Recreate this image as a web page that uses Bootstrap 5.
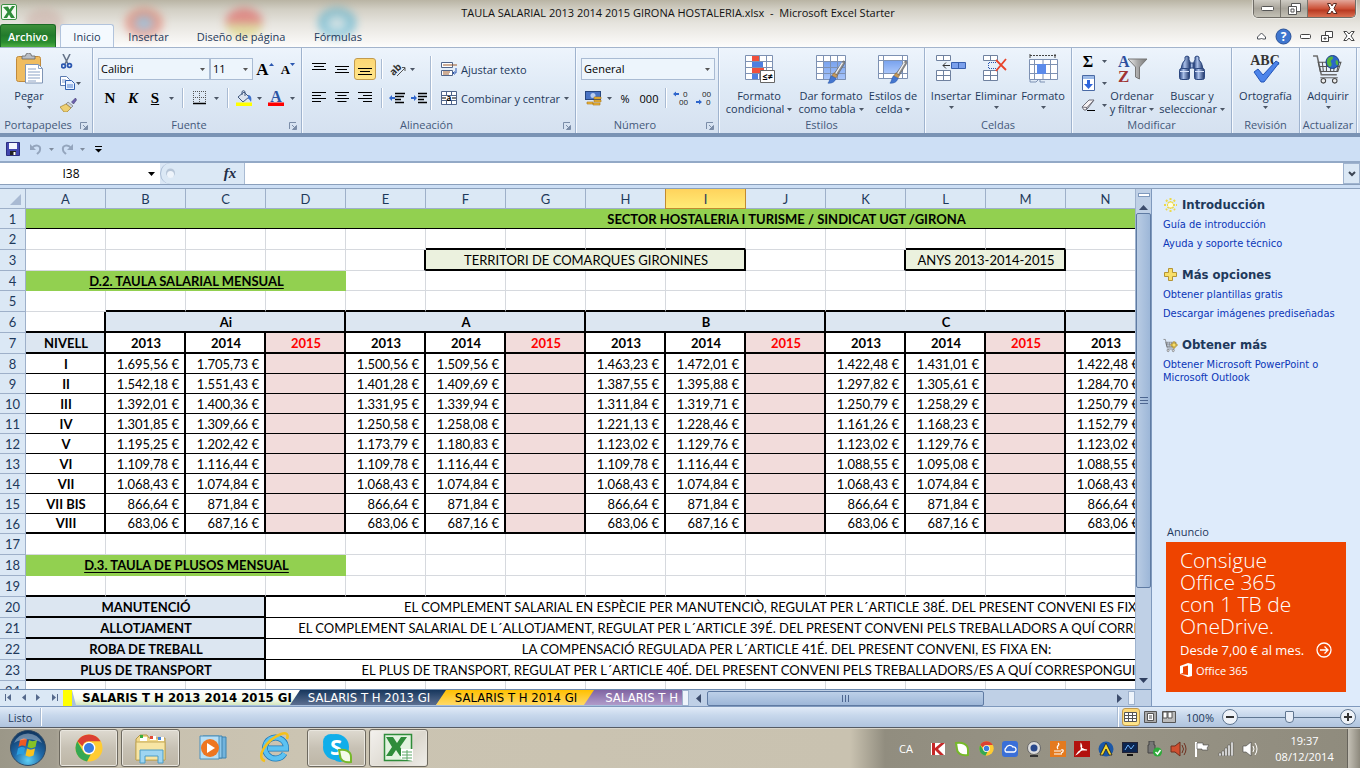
<!DOCTYPE html>
<html lang="es">
<head>
<meta charset="utf-8">
<meta name="viewport" content="width=device-width, initial-scale=1">
<title>TAULA SALARIAL 2013 2014 2015 GIRONA HOSTALERIA.xlsx - Microsoft Excel Starter</title>
<link href="https://cdn.jsdelivr.net/npm/bootstrap@5.3.0/dist/css/bootstrap.min.css" rel="stylesheet">
<style>
  :root { --ink:#1e395b; --edge:#8ba0bc; }
  body { font:11px/13px "Open Sans", "Noto Sans", sans-serif; color:var(--ink); overflow:hidden; background:#cddff5; }
  svg { display:block; flex:none; }
  button { border:0; background:none; padding:0; color:inherit; font:inherit; display:flex; align-items:center; justify-content:center; }
  .app-shell { height:100vh; }

  /* window frame */
  .glass { position:relative; height:48px; overflow:hidden; border-bottom:1px solid #a3b4cc;
    background:linear-gradient(180deg,#b9b4a4 0,#d2cfc4 20%,#e6e4de 50%,#f8f7f5 90%,#fdfdfc 100%); }
  .glow { position:absolute; border-radius:50%; filter:blur(4px); opacity:.5; width:38px; height:30px; top:8px; }
  .title-bar { height:24px; position:relative; }
  .title-side { flex:1 1 0; }
  .title-text { font-size:11px; color:#111; }
  .frame-keys { border:1px solid #6f6c66; border-top:0; border-radius:0 0 5px 5px; overflow:hidden; height:18px; box-shadow:0 0 0 1px rgba(255,255,255,.4); }
  .frame-keys button { height:17px; background:linear-gradient(#cfccc4,#a8a49a 50%,#c4c1b6); border-right:1px solid #77746c; width:27px; }
  .frame-keys .shut { width:47px; border:0; background:linear-gradient(#e3a79a,#cc5239 50%,#b93a22 60%,#da7052); }
  .tab-row { height:24px; position:relative; }
  .tab-row a { color:var(--ink); text-decoration:none; height:24px; display:flex; align-items:center; justify-content:center; }
  .tab-row .file-tab { width:56px; color:#fff; font-weight:600; background:linear-gradient(#3d8f3a,#227b2b 45%,#2b8d30 75%,#56b545); border:1px solid #1b6a25; border-bottom:0; border-radius:3px 3px 0 0; }
  .tab-row .on { width:54px; margin-left:4px; background:#f4f9fe; border:1px solid #b1c3dc; border-bottom:0; border-radius:3px 3px 0 0; }

  /* ribbon */
  .ribbon { height:89px; background:linear-gradient(#edf4fc,#dfeaf6 45%,#d5e1f0); border-bottom:4px solid #7a93b4; }
  .grp { border-right:1px solid #9fb3ce; box-shadow:1px 0 0 #f6faff; display:flex; flex-direction:column; flex:none; }
  .grp-main { height:69px; display:flex; }
  .grp-name { height:16px; color:#44597a; text-align:center; position:relative; line-height:16px; }
  .grp-name svg { position:absolute; right:4px; top:5px; }
  .big { flex-direction:column; justify-content:flex-start; padding-top:5px; line-height:13px; }
  .big svg.pic { margin-bottom:4px; }
  .big .arr { margin-top:4px; }
  .duo { line-height:13px; text-align:center; white-space:nowrap; }
  .duo svg { display:inline-block; vertical-align:2px; }
  .row-top { height:22px; margin-top:10px; display:flex; align-items:center; }
  .row-low { height:24px; margin-top:6px; display:flex; align-items:center; }
  .w8{width:8px}.w10{width:10px}.w12{width:12px}.w14{width:14px}.w20{width:20px}.w22{width:22px}.w24{width:24px}
  .rib-select { font:11px/20px "Open Sans", sans-serif; color:#000; height:22px; padding:0 2px; border:1px solid #a9bbd3; border-radius:0; appearance:none; background-color:#edf5fc;
    background-image:url("data:image/svg+xml,%3Csvg xmlns='http://www.w3.org/2000/svg' width='5' height='3'%3E%3Cpath d='M0 0h5L2.5 3z' fill='%23555'/%3E%3C/svg%3E"); background-repeat:no-repeat; background-position:right 4px center; }
  .serif { font-family:"Liberation Serif", serif; font-weight:bold; font-size:15px; color:#000; }
  .bar { width:1px; height:20px; background:#a9bbd3; box-shadow:1px 0 0 #fff; }
  .lit { background:linear-gradient(#fdd774,#ffe68b); border:1px solid #c29b4e; border-radius:3px; height:22px; }

  .quick { height:26px; background:#cddff5; border-bottom:2px solid #93a9c6; padding-left:3px; gap:3px; }
  .formula { height:22px; background:#dbe7f5; border-bottom:1px solid #8ba0bc; margin-bottom:3px; }
  .formula input { border:0; background:#fff; height:21px; outline:0; border-radius:0; color:#000; padding:0; }
  .name-box { width:160px; }
  .name-box input { width:142px; text-align:center; font-size:12px; }
  .fx-box { width:85px; border:1px solid #a9bbd3; border-width:0 1px 0 1px; border-radius:11px 0 0 11px; background:#dbe8f5; }
  .drop-end { width:17px; border:1px solid #9fb3ce; background:#dbe8f5; }

  /* sheet */
  .work { min-height:0; border-top:1px solid #8ba0bc; }
  .sheet-clip { overflow:hidden; min-height:0; background:#fff; }
  .xl { table-layout:fixed; border-collapse:separate; border-spacing:0; width:1546px; font:13px/16px Lato, sans-serif; color:#000; }
  .xl td, .xl th { padding:0 3px 0 5px; height:21px; border:solid #d6d9de; border-width:0 1px 1px 0; text-align:center; white-space:nowrap; font-weight:normal; overflow:hidden; }
  .xl tr.h20 > * { height:20px; }
  .xl thead th, .xl tbody th { background:#dbe8f5; color:var(--ink); border-color:#9eb0c9; padding:0; font-size:13px; }
  .xl thead th.sel { background:linear-gradient(#ffd35c,#ffec78); border-color:#c28a30; box-shadow:-1px 0 0 #c28a30; }
  .xl td.bb { border-bottom:2px solid #000; } .xl td.b1 { border-bottom:1px solid #000; }
  .xl td.br { border-right:2px solid #000; }
  .xl td.fw { font-weight:bold; }
  .xl td.green { background:#92d050; border-color:#92d050; font-weight:bold; }
  .xl td.green.b1 { border-bottom-color:#000; }
  .xl td.olive { background:#ebf1de; } .xl td.blue { background:#dce6f1; font-weight:bold; }
  .xl td.pink { background:#f2dcdb; color:#f00; font-weight:bold; }
  .xl td.num { text-align:right; padding:0 5px 0 0; }
  .xl u { text-underline-offset:2px; }

  .vscroll { width:16px; background:#bfd0e6; border-left:1px solid #9fb3ce; }
  .vthumb { height:75%; border:1px solid #5f7ba3; border-radius:2px; background:linear-gradient(90deg,#b9cce4,#9db7d8); }
  .sheet-tabs { height:17px; background:#a9c0dd; border-top:1px solid #6e8bb0; font:13px/15px "DejaVu Sans Condensed", "DejaVu Sans", sans-serif; overflow:hidden; }
  .sheet-tabs button { height:15px; white-space:nowrap; }
  .sheet-tabs .leaf { clip-path:polygon(10px 0,100% 0,calc(100% - 12px) 100%,0 100%); margin-right:-12px; }
  .hthumb { width:277px; border:1px solid #5f7ba3; border-radius:2px; background:linear-gradient(#bdd0e8,#9db7d8); height:15px; }

  .side { width:209px; background:#deebfb; border-left:1px solid #7f99bd; padding:8px 4px 0 11px; font:11px/13px "DejaVu Sans Condensed", "DejaVu Sans", sans-serif; }
  .side h2 { font-size:13px; line-height:16px; font-weight:bold; margin:0 0 5px; display:flex; align-items:center; gap:4px; }
  .side h2 svg { width:15px; }
  .side a { color:#0b36b8; text-decoration:none; display:block; margin-bottom:6px; }
  .side section { margin-bottom:11px; }
  .ad { background:#ee4400; width:180px; height:150px; margin-left:3px; padding:7px 14px; color:#fff; font-family:"Open Sans", sans-serif; }
  .ad .pitch { font-weight:300; font-size:21px; line-height:22px; }

  .status { height:22px; background:linear-gradient(#e1ebf7,#c8d8ec 40%,#b0c4de); border-top:1px solid #7f99bd; border-bottom:1px solid #555b63; }
  .zoomer { appearance:none; background:linear-gradient(#5f7691,#5f7691) center/100% 1px no-repeat; width:102px; height:16px; margin:0; }
  .zoomer::-webkit-slider-thumb { appearance:none; width:9px; height:12px; background:#e8eef7; border:1px solid #5f7691; border-radius:1px 1px 4px 4px; }
  .task { height:40px; background:linear-gradient(90deg,#9b9788 0,#a39e90 56px,#c6bfae 70px,#cbc4b2 300px,#c9c2b0 850px,#918d7f 885px,#989486 1100px,#8f8b7d 100%); border-top:1px solid #d9d4c8; }
  .task .apps { gap:3px; }
  .task .win { width:59px; height:38px; border:1px solid #6d695f; border-radius:3px; background:linear-gradient(#dedad0,#c7c1b4 50%,#bdb6a6); box-shadow:inset 0 0 0 1px #e9e6de; }
  .task .flat { width:59px; height:38px; }
  .task .front { background:linear-gradient(135deg,#f3f1ee,#dcd8ce 60%,#f0eeea); }
  .clock { font-size:11px; line-height:16px; color:#fff; text-align:center; }
  .peek { width:13px; background:linear-gradient(90deg,#c5c1b6,#8d897d); border-left:1px solid #66635b; }
</style>
</head>
<body>

<svg width="0" height="0" class="position-absolute" aria-hidden="true">
  <defs>
    <linearGradient id="gTask" x1="0" y1="0" x2="0" y2="1"><stop offset="0" stop-color="#7aa3ee"/><stop offset="1" stop-color="#a9c6fb"/></linearGradient>
    <linearGradient id="gMetal" x1="0" x2="1"><stop offset="0" stop-color="#eee"/><stop offset=".5" stop-color="#aaa"/><stop offset="1" stop-color="#777"/></linearGradient>
    <radialGradient id="gOrb" cx=".5" cy=".85" r=".9"><stop offset="0" stop-color="#5fd0f5"/><stop offset=".45" stop-color="#1f68a8"/><stop offset="1" stop-color="#0d2c52"/></radialGradient>
    <linearGradient id="gBino" x1="0" x2="1"><stop offset="0" stop-color="#24407c"/><stop offset=".4" stop-color="#a9bfe8"/><stop offset="1" stop-color="#1d3468"/></linearGradient>
    <symbol id="arr" viewBox="0 0 5 3"><path d="M0 0h5L2.500 3z" fill="#4c5666"/></symbol>
    <symbol id="dlg" viewBox="0 0 8 8"><path d="M.5 7V.5H7" fill="none" stroke="#7b8da8"/><path d="M3 3l3 3M7.500 3.500v4h-4z" fill="#7b8da8" stroke="#7b8da8"/></symbol>
    <symbol id="brush" viewBox="0 0 20 28"><path d="M18 1c2 0 2 2 1 4l-8 13-4-2z" fill="#8b8b8b" stroke="#555" stroke-width=".6"/><path d="M17 3L9 16" stroke="#f4f4f4" stroke-width="1.500"/><path d="M7 15l4 3-1.500 3-5-2.500z" fill="#c69a5c" stroke="#8a6430" stroke-width=".6"/><path d="M4 18.500l5.500 3C8 26 4 27.500 0 27c2-2 2-6 4-8.500z" fill="#4476cf" stroke="#2a55a5" stroke-width=".6"/></symbol>
    <symbol id="cart" viewBox="0 0 30 30"><path d="M1 2h4l4 18h15" fill="none" stroke="#6e6e6e" stroke-width="1.500"/><path d="M6 8h22l-3 9H8zM7 12h20M10 8l1 9m3-9v9m4-9v9m4-9l-1 9m5-9l-2 9" fill="none" stroke="#555" stroke-width="1"/><circle cx="11" cy="26" r="2.200" fill="#eee" stroke="#444"/><circle cx="22" cy="26" r="2.200" fill="#eee" stroke="#444"/><path d="M8 23h17" stroke="#666"/></symbol>
    <symbol id="chrome" viewBox="0 0 28 28"><circle cx="14" cy="14" r="13.500" fill="#fc3"/><path d="M14 .5A13.500 13.500 0 0 1 25.700 7.300H14a6.700 6.700 0 0 0-6.500 5L2.300 7.300A13.500 13.500 0 0 1 14 .5z" fill="#dc4033"/><path d="M2.300 7.300L8.200 17.400a6.700 6.700 0 0 0 7.500 3L12 27.400A13.500 13.500 0 0 1 2.300 7.300z" fill="#35a853"/><circle cx="14" cy="14" r="6.300" fill="#fff"/><circle cx="14" cy="14" r="5" fill="#3a7de0"/></symbol>
  </defs>
</svg>

<div class="app-shell d-flex flex-column">

<header class="glass flex-shrink-0">
  <span class="glow" style="left:125px;background:radial-gradient(#6a9ccc 25%,#e0604a 45%)"></span>
  <span class="glow" style="left:225px;background:linear-gradient(#e04040 45%,#c8d060 60%,#e8c850)"></span>
  <span class="glow" style="left:318px;background:radial-gradient(#bfe0ea 20%,#1f9cc8 55%)"></span>
  <span class="glow" style="left:25px;background:#c8a8a0"></span>
  <div class="title-bar d-flex align-items-center">
    <div class="title-side"><svg width="18" height="18" viewBox="0 0 18 18"><rect x="1.500" y="1.500" width="15" height="15" rx="1.500" fill="#f4fbf2" stroke="#3b8f43"/><path d="M3 4l5-.5 1.500 3L12 3h3l-4 6 4 6h-4l-2-3.500L7 15H3.500l4-6z" fill="#2f8c3a"/></svg></div>
    <span class="title-text">TAULA SALARIAL 2013 2014 2015 GIRONA HOSTALERIA.xlsx&nbsp; - &nbsp;Microsoft Excel Starter</span>
    <div class="title-side d-flex justify-content-end align-self-start pe-1">
      <div class="frame-keys d-flex">
        <button aria-label="Minimizar"><svg width="13" height="6"><rect x=".5" y=".5" width="12" height="4" rx="1" fill="#fff" stroke="#555"/></svg></button>
        <button aria-label="Restaurar"><svg width="13" height="12" fill="#fff" stroke="#555"><path d="M3.500.5h9v8h-9z"/><path d="M.5 3.500h8v8h-8z"/><path d="M3 6h3v3H3z"/></svg></button>
        <button class="shut" aria-label="Cerrar"><svg width="12" height="11"><path d="M1.500.5h3L6 3l1.500-2.500h3L8 5.500l3 5H7.500L6 8l-1.500 2.500H1l3-5z" fill="#fff" stroke="#5b2a22"/></svg></button>
      </div>
    </div>
  </div>
  <nav class="tab-row d-flex">
    <a href="#" class="file-tab">Archivo</a>
    <a href="#" class="on">Inicio</a>
    <a href="#" style="width:69px">Insertar</a>
    <a href="#" style="width:116px">Diseño de página</a>
    <a href="#" style="width:78px">Fórmulas</a>
    <div class="ms-auto d-flex align-items-center">
      <button class="w22" aria-label="Minimizar cinta"><svg width="9" height="8"><path d="M.5 5L4.500 1l4 4v2h-3l-1-1-1 1h-3z" fill="#fff" stroke="#4a4f57"/></svg></button>
      <button class="w22" aria-label="Ayuda"><svg width="17" height="17"><circle cx="8.500" cy="8.500" r="7.500" fill="#3f76cf" stroke="#2a5298"/><text x="8.500" y="13" font-size="12" font-weight="bold" fill="#fff" text-anchor="middle">?</text></svg></button>
      <button class="w22" aria-label="Minimizar libro"><svg width="11" height="5"><rect x=".5" y=".5" width="10" height="4" rx="1" fill="#fff" stroke="#444"/></svg></button>
      <button class="w22" aria-label="Restaurar libro"><svg width="12" height="11" fill="#fff" stroke="#444"><path d="M4.500.5h7v6h-7z"/><path d="M.5 4.500h7v6h-7z"/><path d="M3 7h2v1H3z"/></svg></button>
      <button class="w22" aria-label="Cerrar libro"><svg width="12" height="10"><path d="M.8.500h3L6 3 8.200.500h3L8 5l3.200 4.500h-3L6 7 3.800 9.500h-3L4 5z" fill="#fff" stroke="#444"/></svg></button>
    </div>
  </nav>
</header>

<div class="ribbon d-flex flex-shrink-0">
  <div class="grp" style="width:93px">
    <div class="grp-main">
      <button class="big" style="width:58px">
        <svg class="pic" width="30" height="32" viewBox="0 0 30 32"><rect x="2.500" y="3.500" width="24" height="25" rx="2" fill="#efbc60" stroke="#c08a3c"/><path d="M8 6V3h3.500a3 3 0 0 1 6 0H21v3z" fill="#b9bec6" stroke="#666" stroke-width=".8"/><path d="M11.500 11.500h13l4 4v14.500h-17z" fill="#fff" stroke="#7f95b5"/><path d="M24.500 11.500v4h4M14 16h8m-8 3h12m-12 3h12m-12 3h12m-12 3h8" fill="none" stroke="#8ba2c5"/></svg>
        Pegar<svg class="arr" width="5" height="3"><use href="#arr"/></svg></button>
      <div class="d-flex flex-column pt-1 gap-1">
        <button style="height:18px;width:18px" aria-label="Cortar"><svg width="12" height="15" viewBox="0 0 12 15"><path d="M2 0l5 10M9 0L4 10" stroke="#66748a" stroke-width="1.600"/><circle cx="2.500" cy="12" r="1.900" fill="none" stroke="#2b57b0" stroke-width="1.800"/><circle cx="8.500" cy="11.500" r="1.900" fill="none" stroke="#2b57b0" stroke-width="1.800"/></svg></button>
        <div class="d-flex"><button style="height:18px;width:18px" aria-label="Copiar"><svg width="15" height="14"><path d="M.5.5h6l3 3v6h-9z" fill="#fff" stroke="#5a7ab0"/><path d="M2 4h4M2 6h4" stroke="#7f9cd0"/><path d="M5.500 4.500h6l3 3v6h-9z" fill="#eaf2ff" stroke="#2f5faf"/><path d="M7 9h6m-6 2h6" stroke="#4f80d0"/></svg></button><svg class="align-self-center" width="5" height="3"><use href="#arr"/></svg></div>
        <button style="height:18px;width:20px" aria-label="Copiar formato"><svg width="17" height="14" viewBox="0 0 17 14"><path d="M15.500 0l-4 4 2 2L16.500 2z" fill="#6c5fae" stroke="#413a70" stroke-width=".6"/><path d="M8 4l5 4-2 2-5-4z" fill="#ccd2da" stroke="#666" stroke-width=".6"/><path d="M6 6l5 4-4 4H4L0 9z" fill="#edcf72" stroke="#a27f2c" stroke-width=".7"/></svg></button>
      </div>
    </div>
    <div class="grp-name pe-3">Portapapeles<svg width="8" height="8"><use href="#dlg"/></svg></div>
  </div>

  <div class="grp" style="width:209px">
    <div class="grp-main flex-column" style="padding-left:5px">
      <div class="row-top">
        <select class="rib-select" style="width:112px" aria-label="Fuente"><option>Calibri</option></select>
        <select class="rib-select" style="width:43px" aria-label="Tamaño"><option>11</option></select>
        <button class="w24 serif" style="font-size:17px" aria-label="Aumentar tamaño">A<svg class="align-self-start" width="5" height="3"><path d="M0 3h5L2.500 0z" fill="#2b57b0"/></svg></button>
        <button class="w22 serif" style="font-size:13px" aria-label="Reducir tamaño">A<svg class="align-self-start" width="5" height="3"><path d="M0 0h5L2.500 3z" fill="#2b57b0"/></svg></button>
      </div>
      <div class="row-low">
        <button class="w24 serif">N</button><button class="w22 serif fst-italic">K</button><button class="w22 serif text-decoration-underline">S</button>
        <button class="w10" aria-label="Subrayado"><svg width="5" height="3"><use href="#arr"/></svg></button>
        <span class="w12 d-flex justify-content-center"><span class="bar"></span></span>
        <button class="w24" aria-label="Bordes"><svg width="14" height="14"><path d="M.5 0v13M6.500 0v13M12.500 0v13M0 .5h13M0 6.500h13" stroke="#555" stroke-dasharray="1 1"/><path d="M0 12.500h13" stroke="#000" stroke-width="1.500"/></svg></button>
        <button class="w8" aria-label="Más bordes"><svg width="5" height="3"><use href="#arr"/></svg></button>
        <span class="w14 d-flex justify-content-center"><span class="bar"></span></span>
        <button class="w20" aria-label="Color de relleno"><svg width="17" height="17"><path d="M2 7l6-5 5 5-6 5z" fill="#dbe4ef" stroke="#41597f"/><path d="M6 5V1.500a2 2 0 0 1 3 0V6" fill="none" stroke="#41597f"/><path d="M12 5c3 0 4 3 3 7-1-2-2-3-3-3.500z" fill="#3f72ca"/><path d="M0 12.500h16V16H0z" fill="#ff0"/></svg></button>
        <button class="w10" aria-label="Más rellenos"><svg width="5" height="3"><use href="#arr"/></svg></button>
        <button class="w24" aria-label="Color de fuente"><svg width="16" height="17"><text x="8" y="12" text-anchor="middle" font-family="Liberation Serif" font-weight="bold" font-size="16" fill="#2c55a4">A</text><path d="M0 12.500h16V16H0z" fill="red"/></svg></button>
        <button class="w8" aria-label="Más colores"><svg width="5" height="3"><use href="#arr"/></svg></button>
      </div>
    </div>
    <div class="grp-name pe-3">Fuente<svg width="8" height="8"><use href="#dlg"/></svg></div>
  </div>

  <div class="grp" style="width:274px">
    <div class="grp-main" style="padding-left:6px">
      <div>
        <div class="row-top">
          <button class="w22" aria-label="Alinear arriba"><svg width="14" height="12"><path d="M0 .5h14M2 3.500h10M0 6.500h14" stroke="#000"/></svg></button>
          <button class="w24" aria-label="Alinear al medio"><svg width="14" height="12"><path d="M0 3.500h14M2 6.500h10M0 9.500h14" stroke="#000"/></svg></button>
          <button class="w22 lit" aria-label="Alinear abajo"><svg width="14" height="14"><path d="M0 6.500h14M2 9.500h10M0 12.500h14" stroke="#000"/></svg></button>
          <span class="w10 d-flex justify-content-center"><span class="bar"></span></span>
          <button class="w24" aria-label="Orientación"><svg width="17" height="15"><text transform="rotate(-45 7 8)" x="0" y="10" font-size="10" font-weight="bold" fill="#333">ab</text><path d="M7 14l8-8m0 3V5.500h-3" fill="none" stroke="#555"/></svg></button>
          <svg width="5" height="3"><use href="#arr"/></svg>
        </div>
        <div class="row-low">
          <button class="w22" aria-label="Izquierda"><svg width="14" height="12"><path d="M0 .5h14M0 3.500h9M0 6.500h14M0 9.500h9" stroke="#000"/></svg></button>
          <button class="w24" aria-label="Centrar"><svg width="14" height="12"><path d="M0 .5h14M2.500 3.500h9M0 6.500h14M2.500 9.500h9" stroke="#000"/></svg></button>
          <button class="w22" aria-label="Derecha"><svg width="14" height="12"><path d="M0 .5h14M5 3.500h9M0 6.500h14M5 9.500h9" stroke="#000"/></svg></button>
          <span class="w10 d-flex justify-content-center"><span class="bar"></span></span>
          <button class="w22" aria-label="Disminuir sangría"><svg width="16" height="13"><path d="M6 1.500h10M6 4.500h9M6 7.500h6M6 10.500h9" stroke="#000" stroke-width="1.400"/><path d="M0 6l3-3v2h3v2H3v2z" fill="#2f66cc"/></svg></button>
          <button class="w22" aria-label="Aumentar sangría"><svg width="16" height="13"><path d="M7 1.500h9M7 4.500h9M7 7.500h6M7 10.500h9" stroke="#000" stroke-width="1.400"/><path d="M6 6L3 3v2H0v2h3v2z" fill="#2f66cc"/></svg></button>
        </div>
      </div>
      <span class="bar mt-2" style="height:54px"></span>
      <div style="padding-left:10px">
        <div class="row-top"><button class="gap-1"><svg width="16" height="15"><path d="M.5.5h11v5H.5zM.5 8.500h11v5H.5z" fill="#fff" stroke="#50658a"/><path d="M2 3h14M2 10h7m-7 2h6" stroke="#9c5a2a"/><path d="M15 6v5h-3m1.500-1.500L12 11l1.500 1.500" fill="none" stroke="#2b57b0"/></svg>Ajustar texto</button></div>
        <div class="row-low"><button class="gap-1"><svg width="16" height="15"><path d="M.5.500h15v13H.5zM.5 4.500h15m-15 5h15M5.500.5v4m5-4v4m-5 5v4m5-4v4" fill="#fff" stroke="#50658a"/><text x="8" y="10" font-size="8" font-weight="bold" text-anchor="middle">a</text><path d="M1 7h4m6 0h4" stroke="#000"/></svg>Combinar y centrar<svg width="5" height="3"><use href="#arr"/></svg></button></div>
      </div>
    </div>
    <div class="grp-name pe-4">Alineación<svg width="8" height="8"><use href="#dlg"/></svg></div>
  </div>

  <div class="grp" style="width:143px">
    <div class="grp-main flex-column" style="padding-left:5px">
      <div class="row-top"><select class="rib-select" style="width:134px" aria-label="Formato de número"><option>General</option></select></div>
      <div class="row-low">
        <button class="w24" aria-label="Moneda"><svg width="17" height="16"><rect x=".5" y="1.500" width="15" height="8" fill="#4a74c4" stroke="#27467f"/><circle cx="8" cy="5.500" r="2.500" fill="#b9cdf0"/><path d="M9 7h7v2H9zm0 3h7v2H9zm-1 3h7v2H8zM2 12h6v2H2z" fill="#f0b93a" stroke="#a87418" stroke-width=".6"/></svg></button>
        <button class="w8" aria-label="Más monedas"><svg width="5" height="3"><use href="#arr"/></svg></button>
        <button class="w24 text-black">%</button><button class="w24 text-black">000</button>
        <span class="w8 d-flex justify-content-center"><span class="bar"></span></span>
        <button class="w24" aria-label="Aumentar decimales"><svg width="16" height="15" font-size="8" fill="#222"><path d="M0 3l3-2.500V2h3v2H3v1.500z" fill="#2f66cc"/><text x="10" y="6">0</text><text x="6" y="14">00</text></svg></button>
        <button class="w22" aria-label="Disminuir decimales"><svg width="16" height="15" font-size="8" fill="#222"><path d="M6 11l-3-2.500V10H0v2h3v1.500z" fill="#2f66cc"/><text x="6" y="6">00</text><text x="10" y="14">0</text></svg></button>
      </div>
    </div>
    <div class="grp-name pe-4">Número<svg width="8" height="8"><use href="#dlg"/></svg></div>
  </div>

  <div class="grp" style="width:206px">
    <div class="grp-main" style="padding-left:3px">
      <button class="big" style="width:74px"><svg class="pic" width="32" height="32"><path d="M2.500 2.500h27v24h-27z" fill="#fff" stroke="#7d91b3"/><path d="M2 8.500h28m-28 6h28m-28 6h28M9.500 2v25m7-25v25m7-25v25" stroke="#7d91b3"/><path d="M9 3h7v5H9zm0 12h12v5H9z" fill="#f0503c"/><path d="M9 9h11v5H9zm0 12h6v5H9z" fill="#4f7fe0"/><path d="M17.500 17.500h14v12h-14z" fill="#fff" stroke="#666"/><text x="24.500" y="27" font-size="9" font-weight="bold" text-anchor="middle">≤≠</text></svg>
        <span class="duo">Formato<br>condicional <svg width="5" height="3"><use href="#arr"/></svg></span></button>
      <button class="big" style="width:70px"><svg class="pic" width="32" height="32"><path d="M1.500 2.500h29v24h-29z" fill="#fff"/><path d="M9 9h22v18H9z" fill="url(#gTask)"/><path d="M1.500 2.500h29v24h-29zM1 8.500h30m-30 6h30m-30 6h30M8.500 2v25m7-25v25m7-25v25" fill="none" stroke="#7d91b3"/><use href="#brush" x="12" y="7" width="19" height="24"/></svg>
        <span class="duo">Dar formato<br>como tabla <svg width="5" height="3"><use href="#arr"/></svg></span></button>
      <button class="big" style="width:54px"><svg class="pic" width="32" height="32"><path d="M1.500 2.500h29v23h-29zM6.500 2v24m19-24v24M1 7.500h30m-30 13h30" fill="#fff" stroke="#7d91b3"/><path d="M7 8h18v12H7z" fill="url(#gTask)"/><use href="#brush" x="12" y="7" width="19" height="24"/></svg>
        <span class="duo">Estilos de<br>celda <svg width="5" height="3"><use href="#arr"/></svg></span></button>
    </div>
    <div class="grp-name">Estilos</div>
  </div>

  <div class="grp" style="width:147px">
    <div class="grp-main" style="padding-left:4px">
      <button class="big" style="width:44px"><svg class="pic" width="32" height="32"><path d="M1.500 2.500h14v5h-14zm7 0v5M1.500 17.500h14v10h-14zm0 5h14m-7-5v10" fill="#fff" stroke="#6f819f"/><path d="M16.500 9.500h14v6h-14zm7 0v6" fill="#7ba0ec" stroke="#3960ae"/><path d="M15 12.500H8m3-3l-3 3 3 3" fill="none" stroke="#333"/></svg>Insertar<svg class="arr" width="5" height="3"><use href="#arr"/></svg></button>
      <button class="big" style="width:46px"><svg class="pic" width="32" height="32"><path d="M3.500 2.500h14v5h-14zm7 0v5M3.500 17.500h14v10h-14zm0 5h14m-7-5v10" fill="#fff" stroke="#6f819f"/><path d="M16 9.500H8.500v6H16" fill="none" stroke="#2b57b0" stroke-dasharray="1 1"/><path d="M16 7l10 10M26 6L16 18" stroke="#e8432a" stroke-width="1.800"/></svg>Eliminar<svg class="arr" width="5" height="3"><use href="#arr"/></svg></button>
      <button class="big" style="width:48px"><svg class="pic" width="32" height="32"><path d="M2.500 6.500h28v20h-28zM7.500 6v21m16-21v21M2 11.500h29m-29 9h29M16 6v21" fill="#fff" stroke="#7d91b3"/><path d="M10 11h9v10h-9z" fill="#5b8bea"/><path d="M3 2.500h26" stroke="#444" stroke-dasharray="2 1"/><path d="M3 1v4m25-4v4" stroke="#444"/><path d="M3 27v2h6l2-2m2 0v2h5" fill="none" stroke="#7d91b3"/></svg>Formato<svg class="arr" width="5" height="3"><use href="#arr"/></svg></button>
    </div>
    <div class="grp-name">Celdas</div>
  </div>

  <div class="grp" style="width:160px">
    <div class="grp-main" style="padding-left:6px">
      <div class="d-flex flex-column pt-1 gap-1" style="width:30px">
        <div class="d-flex align-items-center"><button class="serif" style="width:20px;height:18px;font-size:16px">Σ</button><svg class="ms-1" width="5" height="3"><use href="#arr"/></svg></div>
        <div class="d-flex align-items-center"><button style="width:20px;height:18px" aria-label="Rellenar"><svg width="13" height="16"><path d="M.5.5h12v15H.5z" fill="#fff" stroke="#4a6aa5"/><path d="M1 1h11v3H1z" fill="#9dbbe8"/><path d="M5 5h3v4h3l-4.500 5L2 9h3z" fill="#2f66dd"/></svg></button><svg class="ms-1" width="5" height="3"><use href="#arr"/></svg></div>
        <div class="d-flex align-items-center"><button style="width:20px;height:18px" aria-label="Borrar"><svg width="15" height="13"><path d="M1 8l7-7h5l-6 8-2 2H3z" fill="#f6f2f4" stroke="#6f6f7a"/><path d="M1 8l5 .5 7-7.500M6 8.500L5 11" fill="none" stroke="#6f6f7a"/><path d="M6 11.500h8" stroke="#000"/></svg></button><svg class="ms-1" width="5" height="3"><use href="#arr"/></svg></div>
      </div>
      <button class="big" style="width:48px"><svg class="pic" width="32" height="32" font-family="Liberation Serif" font-weight="bold"><path d="M12 6h19l-7.500 8v12l-4-2V14z" fill="url(#gMetal)" stroke="#777"/><text x="2" y="14" font-size="16" fill="#2c4f9e">A</text><text x="2" y="29" font-size="17" fill="#a03434">Z</text></svg>
        <span class="duo">Ordenar<br>y filtrar <svg width="5" height="3"><use href="#arr"/></svg></span></button>
      <button class="big" style="width:72px"><svg class="pic" width="32" height="32"><g fill="url(#gBino)" stroke="#2c4880"><path d="M9 4q2-2 4 0v3q2 2 1 9H5q1-7 4-9z"/><path d="M19 4q2-2 4 0v3q3 2 4 9h-9q-1-7 1-9z"/><path d="M14 10h4v5h-4z"/><rect x="3.500" y="15.500" width="10" height="11" rx="2"/><rect x="18.500" y="15.500" width="10" height="11" rx="2"/></g><path d="M4 18.500h9m6 0h9" stroke="#d6e2fa"/></svg>
        <span class="duo">Buscar y<br>seleccionar <svg width="5" height="3"><use href="#arr"/></svg></span></button>
    </div>
    <div class="grp-name">Modificar</div>
  </div>

  <div class="grp" style="width:68px">
    <div class="grp-main justify-content-center">
      <button class="big"><svg class="pic" width="32" height="32"><text x="16" y="12" text-anchor="middle" font-family="Liberation Serif" font-weight="bold" font-size="14" fill="#333">ABC</text><path d="M5 19l4-3 5 6L27 8l3 2-15 19h-3z" fill="#4c84ea" stroke="#2355b8"/></svg>Ortografía<svg class="arr" width="5" height="3"><use href="#arr"/></svg></button>
    </div>
    <div class="grp-name">Revisión</div>
  </div>

  <div class="grp" style="width:57px">
    <div class="grp-main justify-content-center">
      <button class="big"><svg class="pic" width="32" height="32"><use href="#cart" x="0" y="1" width="31" height="31"/><circle cx="20.500" cy="9" r="6.500" fill="#2c66c8" stroke="#1a3e86"/><path d="M16 5c3-2 5-2 5 0s-3 2-2 4 1 4-1 5c-3-1-4-6-2-9zm8 2c2 0 3 3 2 5-2 1-3-3-2-5z" fill="#55b53c"/></svg>Adquirir<svg class="arr" width="5" height="3"><use href="#arr"/></svg></button>
    </div>
    <div class="grp-name text-nowrap">Actualizar</div>
  </div>
</div>

<div class="quick d-flex align-items-center flex-shrink-0">
  <button class="w20" aria-label="Guardar"><svg width="14" height="14"><path d="M.5.5h13v13H.5z" fill="#4347b0" stroke="#2c2f80"/><path d="M3 1h8v6H3z" fill="#f4f6ff"/><path d="M4 9h6v4H4z" fill="#222"/><path d="M7.500 10h2v3h-2z" fill="#fff"/></svg></button>
  <button class="w20" aria-label="Deshacer"><svg width="14" height="12"><path d="M3 5c3-4 9-3 8 2 0 2-2 3-3 4" fill="none" stroke="#94a5bd" stroke-width="2"/><path d="M1 1v6h6z" fill="#94a5bd"/></svg></button>
  <svg width="5" height="3" opacity=".6"><use href="#arr"/></svg>
  <button class="w20" aria-label="Rehacer"><svg width="14" height="12"><path d="M11 5C8 1 2 2 3 7c0 2 2 3 3 4" fill="none" stroke="#94a5bd" stroke-width="2"/><path d="M13 1v6H7z" fill="#94a5bd"/></svg></button>
  <svg width="5" height="3" opacity=".6"><use href="#arr"/></svg>
  <button class="w20" aria-label="Personalizar"><svg width="7" height="7"><path d="M0 .5h7" stroke="#000"/><path d="M0 3h7L3.500 6.500z"/></svg></button>
</div>

<div class="formula d-flex flex-shrink-0">
  <div class="name-box d-flex bg-white"><input type="text" value="I38" aria-label="Cuadro de nombres"><button class="w20" aria-label="Nombres"><svg width="7" height="4"><path d="M0 0h7L3.500 4z"/></svg></button></div>
  <div class="fx-box d-flex align-items-center justify-content-between px-1"><svg width="11" height="11"><circle cx="5.500" cy="5" r="4.500" fill="#b7c6d8"/><circle cx="5.500" cy="6.500" r="3.500" fill="#eef4fb"/></svg><button class="w20 serif fst-italic" style="color:#222d45">fx</button></div>
  <input class="flex-fill" type="text" aria-label="Barra de fórmulas">
  <button class="drop-end" aria-label="Expandir"><svg width="8" height="6"><path d="M1 1l3 3 3-3" fill="none" stroke="#3c4654" stroke-width="2"/></svg></button>
</div>

<main class="work d-flex flex-fill">
  <div class="d-flex flex-column flex-fill" style="min-width:0">
    <div class="d-flex flex-fill" style="min-height:0">
      <div class="sheet-clip flex-fill" style="min-width:0"><table class="xl" id="sheet"></table></div>
      <div class="vscroll d-flex flex-column flex-shrink-0">
        <div class="d-flex flex-column align-items-center gap-2 pt-1 flex-shrink-0" style="height:24px"><svg width="12" height="4"><rect x=".5" y=".5" width="11" height="3" fill="#fff" stroke="#7f99bd"/></svg><svg width="9" height="5"><path d="M0 5h9L4.500 0z" fill="#3c4c6c"/></svg></div>
        <div class="vthumb d-flex align-items-center justify-content-center"><svg width="8" height="8"><path d="M0 .5h8M0 3.500h8M0 6.500h8" stroke="#4d6690"/></svg></div>
        <button class="mt-auto" style="height:18px" aria-label="Bajar"><svg width="9" height="5"><path d="M0 0h9L4.500 5z" fill="#2f3f60"/></svg></button>
      </div>
    </div>
    <div class="sheet-tabs d-flex flex-shrink-0">
      <div class="d-flex" style="width:63px;background:#dbe8f5">
        <button class="flex-fill" aria-label="Primera"><svg width="7" height="7"><path d="M.5 0v7" stroke="#55698c"/><path d="M6 0v7L2 3.500z" fill="#55698c"/></svg></button>
        <button class="flex-fill" aria-label="Anterior"><svg width="5" height="7"><path d="M4 0v7L0 3.500z" fill="#55698c"/></svg></button>
        <button class="flex-fill" aria-label="Siguiente"><svg width="5" height="7"><path d="M0 0v7l4-3.500z" fill="#55698c"/></svg></button>
        <button class="flex-fill" aria-label="Última"><svg width="7" height="7"><path d="M6.500 0v7" stroke="#55698c"/><path d="M1 0v7l4-3.500z" fill="#55698c"/></svg></button>
      </div>
      <div style="width:9px;background:#ff0"></div>
      <button class="leaf fw-bold text-black" style="width:230px;background:linear-gradient(#fff,#f6faf0 60%,#d5e8bd);clip-path:polygon(0 0,100% 0,calc(100% - 12px) 100%,4px 100%)">SALARIS T H 2013 2014 2015 GI</button>
      <button class="leaf text-white" style="width:158px;background:linear-gradient(#17375d,#5c6f90)">SALARIS T H 2013 GI</button>
      <button class="leaf text-black" style="width:160px;background:linear-gradient(#ffc000,#ffd966)">SALARIS T H 2014 GI</button>
      <button class="text-white justify-content-end pe-1" style="width:98px;background:linear-gradient(#8064a2,#b09bc9);clip-path:polygon(10px 0,100% 0,100% 100%,0 100%)">SALARIS T H</button>
      <div style="width:7px;background:#eef4fb;border:1px solid #9fb3ce"></div>
      <div class="d-flex flex-fill align-items-center" style="background:#bfd0e6">
        <button style="width:18px" aria-label="Izquierda"><svg width="5" height="9"><path d="M5 0v9L0 4.500z" fill="#3c4c6c"/></svg></button>
        <div class="hthumb d-flex align-items-center justify-content-center"><svg width="8" height="7"><path d="M.5 0v7M3.500 0v7M6.500 0v7" stroke="#4d6690"/></svg></div>
        <button class="ms-auto" style="width:17px" aria-label="Derecha"><svg width="5" height="9"><path d="M0 0v9l5-4.500z" fill="#3c4c6c"/></svg></button>
        <div style="width:7px;height:14px;background:#eef4fb;border:1px solid #9fb3ce"></div>
        <div style="width:16px"></div>
      </div>
    </div>
  </div>

  <aside class="side d-flex flex-column flex-shrink-0">
    <section><h2><svg height="14"><path d="M7.500 0v14M1 7h13M3 2l9 10M12 2L3 12" stroke="#ecd94b" stroke-width="2" stroke-dasharray="2 1"/><circle cx="7.500" cy="7" r="2.500" fill="#fffde0"/></svg>Introducción</h2><a href="#">Guía de introducción</a><a href="#">Ayuda y soporte técnico</a></section>
    <section><h2><svg height="14"><path d="M5.500.5h4v4h4v4h-4v4h-4v-4h-4v-4h4z" fill="#f7df6a" stroke="#b49435"/></svg>Más opciones</h2><a href="#">Obtener plantillas gratis</a><a href="#">Descargar imágenes prediseñadas</a></section>
    <section><h2><svg height="15"><use href="#cart" x="0" y="0" width="14" height="15"/><path d="M10 4h2v2h2v2h-2v2h-2V8H8V6h2z" fill="#f7df6a" stroke="#b49435"/></svg>Obtener más</h2><a href="#">Obtener Microsoft PowerPoint o Microsoft Outlook</a></section>
    <div class="mt-auto" style="margin-bottom:14px">
      <div class="ms-1 mb-1" style="font-family:'Open Sans',sans-serif">Anuncio</div>
      <div class="ad">
        <div class="pitch">Consigue<br>Office 365<br>con 1 TB de<br>OneDrive.</div>
        <div class="d-flex align-items-center justify-content-between mt-1 mb-1" style="font-size:13px;line-height:18px"><span class="text-nowrap">Desde 7,00 € al mes.</span><svg width="16" height="16" fill="none" stroke="#fff" stroke-width="1.300"><circle cx="8" cy="8" r="7"/><path d="M4 8h8M8.500 4.500L12 8l-3.500 3.500"/></svg></div>
        <div class="d-flex align-items-center gap-1"><svg width="12" height="14"><path d="M0 3l8-3 4 1v12l-4 1-8-3 8 1V2.500L3 3.800V10l-3 1z" fill="#fff"/></svg>Office 365</div>
      </div>
    </div>
  </aside>
</main>

<footer class="status d-flex align-items-center flex-shrink-0">
  <span class="ps-2">Listo</span><span class="bar ms-2" style="height:18px"></span>
  <div class="ms-auto d-flex align-items-center pe-1">
    <span class="bar me-1"></span>
    <button class="lit" style="width:18px;height:18px" aria-label="Normal"><svg width="14" height="11"><path d="M.5.5h12v9H.5zm0 3h12m-12 3h12M4.500.5v9m4-9v9" fill="#fff" stroke="#555"/></svg></button>
    <button style="width:20px" aria-label="Diseño de página"><svg width="13" height="12"><path d="M.5.5h12v11H.5z" fill="#aaa" stroke="#555"/><path d="M3.500 2.500h6v7h-6zM5 5h3M5 7h3" fill="#fff" stroke="#555"/></svg></button>
    <button style="width:18px" aria-label="Salto de página"><svg width="14" height="12"><path d="M.5.5h13v11H.5z" fill="#bbb" stroke="#555"/><path d="M1 1h4v6H1zm5 0h4v6H6z" fill="#fff" stroke="#555"/></svg></button>
    <span class="ms-2 me-2">100%</span>
    <button aria-label="Alejar"><svg width="16" height="16"><circle cx="8" cy="8" r="7.500" fill="#eef2f8" stroke="#5f7691"/><path d="M4 8h8" stroke="#333" stroke-width="2"/></svg></button>
    <input class="zoomer" type="range" min="0" max="100" value="50" aria-label="Zoom">
    <button aria-label="Acercar"><svg width="16" height="16"><circle cx="8" cy="8" r="7.500" fill="#eef2f8" stroke="#5f7691"/><path d="M4 8h8M8 4v8" stroke="#333" stroke-width="2"/></svg></button>
  </div>
</footer>

<div class="task d-flex flex-shrink-0">
  <div class="apps d-flex align-items-start">
    <button style="width:56px;height:38px" aria-label="Inicio"><svg width="38" height="38"><circle cx="19" cy="19" r="17.500" fill="url(#gOrb)" stroke="#2d4864"/><path d="M11 11c3-2 5-2 7-.5l-1.500 7c-2-1.500-4.500-1.500-7 .5z" fill="#ee5a24"/><path d="M20 11c2 1.500 5 1.500 8 0l-1.500 7c-3 1.500-5.500 1.500-8 0z" fill="#85c226"/><path d="M9 19.500c2.500-2 5-2 7-.5l-1.500 7c-2-1.500-4.500-1.500-7 .5z" fill="#2a9fe0"/><path d="M18 19.500c2.500 1.500 5 1.500 8 0l-1.500 7c-3 1.500-5.500 1.500-8 0z" fill="#fcc21c"/><path d="M5 14A15 15 0 0 1 33 14C25 9 13 9 5 14z" fill="#fff" opacity=".35"/></svg></button>
    <button class="win" aria-label="Chrome"><svg width="28" height="28"><use href="#chrome"/></svg></button>
    <button class="win" aria-label="Explorador"><svg width="34" height="31"><path d="M2 6l4-4h7l2 3h16v22H2z" fill="#f2d98b" stroke="#b49848"/><path d="M6 4h7v4H6zm10-1h6v4h-6zm8 1h6v4h-6z" fill="#fff"/><path d="M6 2h3v3H6z" fill="#38b03c"/><path d="M16 3h3v3h-3z" fill="#e24b35"/><path d="M24 4h3v3h-3z" fill="#3f86e0"/><path d="M2 9h29v18H2z" fill="#f7e5a4" stroke="#c5aa5b"/><path d="M6 30V17h23v13h-5v-7H11v7z" fill="#9ed5f1" stroke="#4b9cc6"/></svg></button>
    <button class="flat" aria-label="Reproductor"><svg width="30" height="28"><path d="M9 3h19v21H9z" fill="#72b3dc" stroke="#3f84b0"/><path d="M5 2h19v22H5z" fill="#8fc8ea" stroke="#3f84b0"/><path d="M2 2h19v23H2z" fill="#b8dff5" stroke="#4a90bd"/><circle cx="12" cy="14" r="9" fill="#ee7621"/><path d="M9 9v10l8-5z" fill="#fff"/></svg></button>
    <button class="flat" aria-label="Internet Explorer"><svg width="34" height="34" fill="none"><path d="M26.500 22.500A10.500 10.500 0 1 1 28 17.500H10" stroke="#1c78b8" stroke-width="6"/><path d="M26.500 22.500A10.500 10.500 0 1 1 28 17.500H10" stroke="#5cc2f2" stroke-width="4.500"/><path d="M7 30C-3 27 8 9 23 3c5-2 8 0 6 5" stroke="#f4c01c" stroke-width="2.500"/></svg></button>
    <button class="win" aria-label="Skype"><svg width="34" height="34"><circle cx="11" cy="11" r="8" fill="#10aeea"/><circle cx="20" cy="22" r="9" fill="#10aeea"/><circle cx="16" cy="16" r="13" fill="#10aeea"/><text x="16" y="24" text-anchor="middle" font-size="22" font-weight="bold" fill="#fff">S</text><path d="M19 19c6-1 12 1 12 7v5c-7 1-11-2-11-7z" fill="#f4fbe8" stroke="#76b82a" stroke-width="2"/></svg></button>
    <button class="win front" aria-label="Excel"><svg width="34" height="32"><path d="M2.500 2.500h27v26h-27z" fill="#e3f3e0" stroke="#2f8c3a" stroke-width="1.500"/><path d="M4 5h7l4 6 4-6h6l-7 10 6 9h-6l-4-6-4 6H4l6-9z" fill="#2f8c3a"/><path d="M19 17h12v12l-12-2z" fill="#fff"/><path d="M20 20h10m-10 3h10m-10 3h10M25 18v10" stroke="#5fa868"/></svg></button>
  </div>
  <div class="ms-auto d-flex align-items-center">
    <span class="text-white" style="width:27px">CA</span>
    <div class="d-flex">
      <button class="w24" aria-label="Antivirus"><svg width="16" height="16"><path d="M1 2h14v12H1z" fill="#fff"/><path d="M2 2h3v5l6-5h4L8 8l6 6h-4L5 9v5H2z" fill="#c62828"/></svg></button>
      <button class="w24" aria-label="Evernote"><svg width="16" height="16"><path d="M2 2c6-1 12 1 12 7v5C7 15 3 12 3 8z" fill="#fff" stroke="#76b82a" stroke-width="2"/></svg></button>
      <button class="w24" aria-label="Chrome"><svg width="15" height="15"><use href="#chrome"/></svg></button>
      <button class="w24" aria-label="Nube"><svg width="16" height="16"><rect width="16" height="16" rx="3" fill="#3a6fd8"/><path d="M4 11a2.500 2.500 0 0 1 0-4 4 4 0 0 1 7-1 2.500 2.500 0 0 1 1 5z" fill="none" stroke="#fff" stroke-width="1.300"/></svg></button>
      <button class="w24" aria-label="Cámara"><svg width="16" height="16"><circle cx="8" cy="7" r="6.500" fill="#ddd" stroke="#666"/><circle cx="8" cy="7" r="3.500" fill="#29488c"/><path d="M4 15h8" stroke="#333" stroke-width="2"/></svg></button>
      <button class="w24" aria-label="Java"><svg width="16" height="16"><rect width="16" height="16" fill="#e47a1e"/><path d="M8 2c3 2-3 3 0 6M4 10h7M4 13h8m-1-4c3-1 3 2 0 3" fill="none" stroke="#fff" stroke-width="1.200"/></svg></button>
      <button class="w24" aria-label="Adobe Reader"><svg width="16" height="16"><rect width="16" height="16" fill="#b3110d"/><path d="M3 13C7 11 9 6 7 3c-1 4 2 6 6 6-4-1-8 1-10 4z" fill="none" stroke="#fff" stroke-width="1.200"/></svg></button>
      <button class="w24" aria-label="Red A"><svg width="16" height="16"><circle cx="8" cy="8" r="7.500" fill="#1b58a8"/><path d="M2 14L8 2l6 12h-3L8 8l-3 6z" fill="#f4d631" stroke="#111" stroke-width=".7"/></svg></button>
      <button class="w24" aria-label="Pantalla"><svg width="16" height="16"><rect x=".5" y="1.500" width="15" height="10" fill="#0b2550" stroke="#223"/><path d="M3 9l3-5 3 4 3-4" stroke="#6fb4ff" fill="none"/><path d="M5 14h6" stroke="#111" stroke-width="2"/></svg></button>
      <button class="w24" aria-label="USB"><svg width="17" height="16"><path d="M3 0h5v4h1v8H2V4h1z" fill="#777" stroke="#444"/><circle cx="11.500" cy="11" r="4.500" fill="#2eab3a"/><path d="M9.500 11l2 2 3-4" fill="none" stroke="#fff" stroke-width="1.500"/></svg></button>
      <button class="w24" aria-label="Sonido"><svg width="17" height="16"><path d="M1 5h4l5-4v14l-5-4H1z" fill="#d05030" stroke="#70301f"/><path d="M12 4q3 4 0 8m2-10q4 6 0 12" fill="none" stroke="#70301f"/></svg></button>
      <button class="w24" aria-label="Centro de actividades"><svg width="16" height="16"><path d="M2 1v15" stroke="#fff" stroke-width="2"/><path d="M3 2h6v2h6l-2 3 1 2H8V8H3z" fill="#fff" stroke="#444" stroke-width=".6"/></svg></button>
      <button class="w24" aria-label="Red"><svg width="16" height="14"><path d="M1 11h2v3H1zm3-2h2v5H4zm3-3h2v8H7zm3-3h2v11h-2zm3-3h2v14h-2z" fill="#fff" stroke="#444" stroke-width=".5"/></svg></button>
      <button class="w24" aria-label="Volumen"><svg width="16" height="16"><path d="M1 5h3l5-4v14l-5-4H1z" fill="#fff" stroke="#444" stroke-width=".6"/><path d="M11 5q2 3 0 6m2-9q4 6 0 12" fill="none" stroke="#fff"/></svg></button>
    </div>
    <div class="clock" style="width:85px">19:37<br>08/12/2014</div>
    <div class="peek align-self-stretch"></div>
  </div>
</div>
</div>

<script>
  // Salary table: one row per level, two figures per group (2013, 2014)
  const levels = ['I','II','III','IV','V','VI','VII','VII BIS','VIII'];
  const groups = [
    [['1.695,56','1.705,73'],['1.542,18','1.551,43'],['1.392,01','1.400,36'],['1.301,85','1.309,66'],['1.195,25','1.202,42'],['1.109,78','1.116,44'],['1.068,43','1.074,84'],['866,64','871,84'],['683,06','687,16']],
    [['1.500,56','1.509,56'],['1.401,28','1.409,69'],['1.331,95','1.339,94'],['1.250,58','1.258,08'],['1.173,79','1.180,83'],['1.109,78','1.116,44'],['1.068,43','1.074,84'],['866,64','871,84'],['683,06','687,16']],
    [['1.463,23','1.472,01'],['1.387,55','1.395,88'],['1.311,84','1.319,71'],['1.221,13','1.228,46'],['1.123,02','1.129,76'],['1.109,78','1.116,44'],['1.068,43','1.074,84'],['866,64','871,84'],['683,06','687,16']],
    [['1.422,48','1.431,01'],['1.297,82','1.305,61'],['1.250,79','1.258,29'],['1.161,26','1.168,23'],['1.123,02','1.129,76'],['1.088,55','1.095,08'],['1.068,43','1.074,84'],['866,64','871,84'],['683,06','687,16']]
  ];
  const lastCol = ['1.422,48','1.284,70','1.250,79','1.152,79','1.123,02','1.088,55','1.068,43','866,64','683,06'];
  const td = (c, t = '', span = 1) => `<td class="${c}" colspan="${span}">${t}</td>`;
  const many = (n, c = '') => td(c).repeat(n);
  const row = (n, cells, h = '') => `<tr class="${h}"><th scope="row">${n}</th>${cells}</tr>`;

  let html = '<colgroup><col style="width:26px">' + '<col style="width:80px">'.repeat(19) + '</colgroup><thead><tr class="h20"><th><svg width="12" height="12" style="margin:3px 0 0 10px"><path d="M11 0v11H0z" fill="#a9bad3"/></svg></th>';
  for (const c of 'ABCDEFGHIJKLMN') html += `<th scope="col"${c === 'I' ? ' class="sel"' : ''}>${c}</th>`;
  html += '<th colspan="5"></th></tr></thead><tbody>';
  html += row(1, td('green b1', 'SECTOR HOSTALERIA I TURISME / SINDICAT UGT /GIRONA', 19), 'h20');
  html += row(2, many(5) + many(4, 'bb') + many(2) + many(2, 'bb') + many(6));
  html += row(3, many(4) + td('br') + td('olive bb br', 'TERRITORI DE COMARQUES GIRONINES', 4) + td('') + td('br') + td('olive bb br', 'ANYS 2013-2014-2015', 2) + many(6));
  html += row(4, td('green', '<u>D.2. TAULA SALARIAL MENSUAL</u>', 4) + many(15), 'h20');
  html += row(5, td('') + many(18, 'bb'));
  html += row(6, td('bb br') + ['Ai', 'A', 'B', 'C'].map(g => td('blue bb br', g, 3)).join('') + td('blue bb', '', 6));
  html += row(7, td('blue bb br', 'NIVELL') + (td('bb br fw', '2013') + td('bb br fw', '2014') + td('pink bb br', '2015')).repeat(4) + td('bb br fw', '2013') + many(5, 'bb'));
  levels.forEach((l, i) => {
    const b = i === 8 ? 'bb' : 'b1';
    html += row(8 + i, td(b + ' br fw', l) + groups.map(g => g[i].map(v => td(b + ' br num', v + ' €')).join('') + td(b + ' br pink')).join('') + td(b + ' br num', lastCol[i] + ' €') + many(5, b), 'h20');
  });
  html += row(17, many(19));
  html += row(18, td('green', '<u>D.3. TAULA DE PLUSOS MENSUAL</u>', 4) + many(15));
  html += row(19, many(19, 'bb'));
  [['MANUTENCIÓ', 'EL COMPLEMENT SALARIAL EN ESPÈCIE PER MANUTENCIÒ, REGULAT PER L´ARTICLE 38É. DEL PRESENT CONVENI ES FIXA EN:'],
   ['ALLOTJAMENT', 'EL COMPLEMENT SALARIAL DE L´ALLOTJAMENT, REGULAT PER L´ARTICLE 39É. DEL PRESENT CONVENI PELS TREBALLADORS A QUÍ CORRESPONGUI, ES FIXA EN:'],
   ['ROBA DE TREBALL', 'LA COMPENSACIÓ REGULADA PER L´ARTICLE 41É. DEL PRESENT CONVENI, ES FIXA EN:'],
   ['PLUS DE TRANSPORT', 'EL PLUS DE TRANSPORT, REGULAT PER L´ARTICLE 40É. DEL PRESENT CONVENI PELS TREBALLADORS/ES A QUÍ CORRESPONGUI, ES FIXA EN:']
  ].forEach(([k, t], i) => { html += row(20 + i, td('blue bb br', k, 3) + td(i === 3 ? 'bb' : 'b1', t, 13) + many(3)); });
  html += row(24, many(19)) + '</tbody>';
  document.getElementById('sheet').innerHTML = html;
</script>
<script src="https://cdn.jsdelivr.net/npm/bootstrap@5.3.0/dist/js/bootstrap.bundle.min.js"></script>
</body>
</html>
